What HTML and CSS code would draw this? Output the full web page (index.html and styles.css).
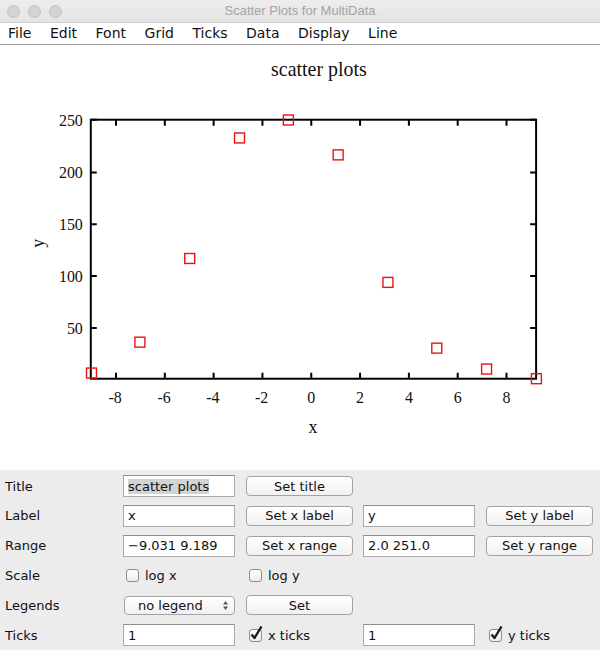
FILE: index.html
```
<!DOCTYPE html>
<html>
<head>
  <title>Scatter Plots for MultiData</title>
  <link rel="stylesheet" href="styles.css">
</head>
<body>
  <div class="window">
    <div class="titlebar">
      <div class="lights">
        <span class="light"></span>
        <span class="light"></span>
        <span class="light"></span>
      </div>
      <span class="wintitle">Scatter Plots for MultiData</span>
    </div>
    <div class="menubar">
      <span>File</span>
      <span>Edit</span>
      <span>Font</span>
      <span>Grid</span>
      <span>Ticks</span>
      <span>Data</span>
      <span>Display</span>
      <span>Line</span>
    </div>

    <svg class="plot" width="600" height="427" viewBox="0 44 600 427">
      <text class="title" x="319" y="75">scatter plots</text>

      <!-- frame -->
      <rect class="frame" x="90" y="119" width="447" height="260"/>

      <!-- x ticks, bottom and top -->
      <g class="ticks">
        <path d="M115.3 379v-6M164.3 379v-6M213.3 379v-6M262.3 379v-6M311.3 379v-6M360.3 379v-6M409.3 379v-6M458.3 379v-6M507.3 379v-6"/>
        <path d="M115.3 119v6M164.3 119v6M213.3 119v6M262.3 119v6M311.3 119v6M360.3 119v6M409.3 119v6M458.3 119v6M507.3 119v6"/>
        <path d="M90 119h6M90 172h6M90 224h6M90 276h6M90 328h6"/>
        <path d="M537 119h-6M537 172h-6M537 224h-6M537 276h-6M537 328h-6"/>
      </g>

      <g class="xlabels">
        <text x="114.5" y="403">-8</text>
        <text x="163.5" y="403">-6</text>
        <text x="212.5" y="403">-4</text>
        <text x="261.5" y="403">-2</text>
        <text x="311.3" y="403">0</text>
        <text x="360.3" y="403">2</text>
        <text x="409.3" y="403">4</text>
        <text x="458.3" y="403">6</text>
        <text x="507.3" y="403">8</text>
      </g>
      <g class="ylabels">
        <text x="82" y="125">250</text>
        <text x="82" y="178">200</text>
        <text x="82" y="230">150</text>
        <text x="82" y="282">100</text>
        <text x="82" y="334">50</text>
      </g>

      <text class="axislabel" x="313" y="433">x</text>
      <text class="axislabel" transform="translate(43 243) rotate(-90)">y</text>

      <!-- data points -->
      <g class="points">
        <rect x="85.7" y="368.3" width="10" height="10"/>
        <rect x="134.3" y="337.3" width="10" height="10"/>
        <rect x="184.3" y="253.3" width="10" height="10"/>
        <rect x="234.3" y="132.3" width="10" height="10"/>
        <rect x="283.3" y="114.3" width="10" height="10"/>
        <rect x="333.3" y="149.3" width="10" height="10"/>
        <rect x="383.3" y="277.3" width="10" height="10"/>
        <rect x="432.3" y="343.3" width="10" height="10"/>
        <rect x="482.3" y="364.3" width="10" height="10"/>
        <rect x="532.3" y="374" width="10" height="10"/>
      </g>
    </svg>

    <div class="panel">
      <span class="label">Title</span>
      <div class="field"><span class="selected">scatter plots</span></div>
      <div class="button">Set title</div>
      <span></span>
      <span></span>

      <span class="label">Label</span>
      <div class="field">x</div>
      <div class="button">Set x label</div>
      <div class="field">y</div>
      <div class="button">Set y label</div>

      <span class="label">Range</span>
      <div class="field">&minus;9.031 9.189</div>
      <div class="button">Set x range</div>
      <div class="field">2.0 251.0</div>
      <div class="button">Set y range</div>

      <span class="label">Scale</span>
      <div class="check"><span class="box"></span>log x</div>
      <div class="check"><span class="box"></span>log y</div>
      <span></span>
      <span></span>

      <span class="label">Legends</span>
      <div class="select">
        <span>no legend</span>
        <svg class="arrows" width="7" height="11" viewBox="0 0 7 11">
          <path d="M3.5 1L6 4.5H1z"/>
          <path d="M3.5 10L6 6.5H1z"/>
        </svg>
      </div>
      <div class="button">Set</div>
      <span></span>
      <span></span>

      <span class="label">Ticks</span>
      <div class="field">1</div>
      <div class="check">
        <span class="box">
          <svg class="tick" width="14" height="16" viewBox="0 0 14 16"><path d="M2.5 9.5L5.5 13L12.5 1.5"/></svg>
        </span>x ticks
      </div>
      <div class="field">1</div>
      <div class="check">
        <span class="box">
          <svg class="tick" width="14" height="16" viewBox="0 0 14 16"><path d="M2.5 9.5L5.5 13L12.5 1.5"/></svg>
        </span>y ticks
      </div>
    </div>
  </div>
</body>
</html>
```

FILE: styles.css
```
body {
  margin: 0;
  font-family: "DejaVu Sans", sans-serif;
  background-color: #ffffff;
}

.window {
  width: 600px;
  height: 650px;
  overflow: hidden;
  display: flex;
  flex-direction: column;
}

.titlebar {
  height: 22px;
  background: linear-gradient(#ededed, #e4e4e4);
  display: flex;
  align-items: center;
  justify-content: center;
  position: relative;
}

.lights {
  position: absolute;
  left: 7px;
  top: 5px;
  display: flex;
  gap: 8px;
}

.light {
  width: 11px;
  height: 11px;
  border-radius: 50%;
  background-color: #d3d3d3;
  border: 0.5px solid #c4c4c4;
}

.wintitle {
  font-size: 13px;
  color: #a4a4a4;
  font-family: "Liberation Sans", sans-serif;
}

.menubar {
  height: 21px;
  border-top: 1px solid #d0d0d0;
  border-bottom: 1px solid #9c9c9c;
  display: flex;
  align-items: center;
  gap: 18.5px;
  padding-left: 8px;
  font-size: 14px;
  color: #111111;
}

.plot {
  display: block;
  font-family: "Liberation Serif", serif;
}

.plot .title {
  font-size: 20px;
  text-anchor: middle;
  fill: #111111;
}

.frame {
  fill: none;
  stroke: #000000;
  stroke-width: 2;
}

.ticks path {
  stroke: #000000;
  stroke-width: 2;
}

.xlabels text {
  font-size: 16px;
  text-anchor: middle;
  fill: #111111;
}

.ylabels text {
  font-size: 16px;
  text-anchor: end;
  fill: #111111;
}

.axislabel {
  font-size: 18px;
  text-anchor: middle;
  fill: #111111;
}

.points rect {
  fill: none;
  stroke: #ee1111;
  stroke-width: 1.4;
}

.panel {
  flex: 1;
  background-color: #ececec;
  display: grid;
  grid-template-columns: 118px 123px 117px 123px 106px;
  grid-auto-rows: 29.8px;
  align-items: center;
  padding: 1px 0 0 5px;
  font-size: 13px;
  color: #111111;
}

.field {
  width: 112px;
  height: 22px;
  box-sizing: border-box;
  border: 1px solid #a9a9a9;
  border-top-color: #8e8e8e;
  background-color: #ffffff;
  padding: 0 4px;
  display: flex;
  align-items: center;
  white-space: nowrap;
}

.selected {
  background-color: #d3d3d3;
}

.button {
  width: 107px;
  height: 20px;
  box-sizing: border-box;
  border: 1px solid #a3a3a3;
  border-radius: 4px;
  background: linear-gradient(#ffffff, #f1f1f1);
  display: flex;
  align-items: center;
  justify-content: center;
  white-space: nowrap;
}

.check {
  display: flex;
  align-items: center;
  gap: 6px;
  padding-left: 3px;
}

.box {
  width: 13px;
  height: 13px;
  box-sizing: border-box;
  border: 1px solid #8d8d8d;
  border-radius: 3px;
  background: linear-gradient(#ffffff, #ececec);
  position: relative;
}

.tick {
  position: absolute;
  left: -1px;
  top: -5px;
}

.tick path {
  fill: none;
  stroke: #1a1a1a;
  stroke-width: 2.4;
  stroke-linejoin: round;
}

.select {
  width: 111px;
  height: 19px;
  box-sizing: border-box;
  border: 1px solid #a3a3a3;
  border-radius: 4px;
  background: linear-gradient(#ffffff, #f1f1f1);
  display: flex;
  align-items: center;
  justify-content: space-between;
  padding: 0 5px 0 13px;
  margin-left: 1px;
}

.arrows path {
  fill: #555555;
}
```
